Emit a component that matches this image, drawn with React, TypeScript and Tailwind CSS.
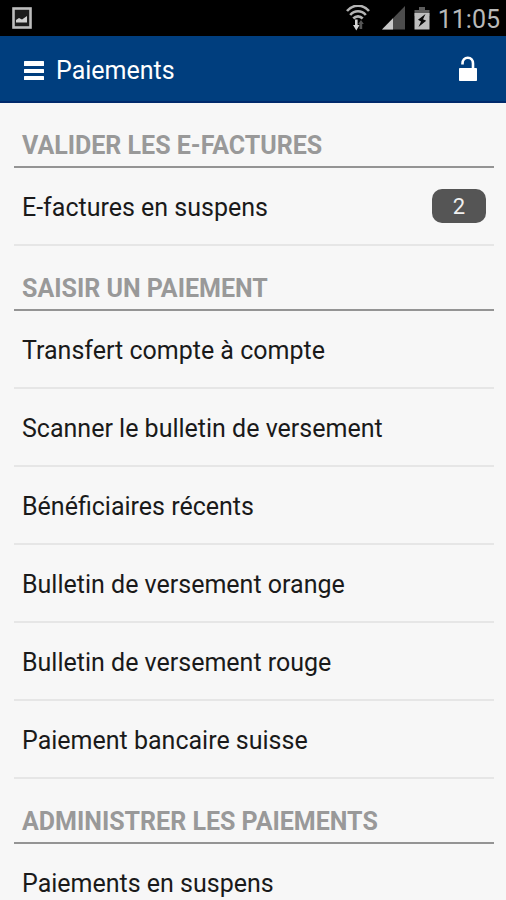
type Item = { label: string; count?: number };

const sections: { title: string; items: Item[] }[] = [
  {
    title: "VALIDER LES E-FACTURES",
    items: [{ label: "E-factures en suspens", count: 2 }],
  },
  {
    title: "SAISIR UN PAIEMENT",
    items: [
      { label: "Transfert compte à compte" },
      { label: "Scanner le bulletin de versement" },
      { label: "Bénéficiaires récents" },
      { label: "Bulletin de versement orange" },
      { label: "Bulletin de versement rouge" },
      { label: "Paiement bancaire suisse" },
    ],
  },
  {
    title: "ADMINISTRER LES PAIEMENTS",
    items: [{ label: "Paiements en suspens" }],
  },
];

function PictureIcon() {
  return (
    <svg width="20" height="22" viewBox="0 0 20 22" aria-hidden="true">
      <rect x="1.5" y="1.5" width="17" height="19" fill="#1c1c1c" stroke="#bdbdbd" strokeWidth="2.6" />
      <path d="M4 15.5V13l3-2 3 1.500 5-3.500V15.500z" fill="#d0d0d0" />
    </svg>
  );
}

function WifiIcon() {
  return (
    <svg width="24" height="26" viewBox="0 0 24 26" fill="none" aria-hidden="true">
      <g stroke="#b4b4b4" strokeWidth="2.6">
        <path d="M1 6C7-1 17-1 23 6" />
        <path d="M4.200 10C8.600 5 15.400 5 19.800 10" />
        <path d="M7.300 13.500C10 10.600 14 10.600 16.700 13.500" />
      </g>
      <path d="M9 14.500h2.600V20h2L10.300 25.500 7 20h2z" fill="#d6d6d6" />
      <path d="M13.500 24v-5h-1.300l2.800-4 2.800 4h-1.600v5z" fill="#555" />
    </svg>
  );
}

function SignalIcon() {
  return (
    <svg width="24" height="24" viewBox="0 0 24 24" aria-hidden="true">
      <path d="M0 23.500 23 0v23.500z" fill="#4c4c4c" />
      <path d="M0 23.500 11 12.300v11.200z" fill="#c8c8c8" />
    </svg>
  );
}

function BatteryIcon() {
  return (
    <svg width="16" height="24" viewBox="0 0 16 24" aria-hidden="true">
      <path d="M5 1h6v3h4.500v6H.5V4H5z" fill="#5c5c5c" />
      <path d="M.5 7h15v16.500H.5z" fill="#bebebe" />
      <path d="M11.500 8 4 13.800l3 1.700L4.500 21l7.700-6.200-3.200-1.600z" fill="#080808" />
    </svg>
  );
}

function MenuIcon() {
  return (
    <svg width="20" height="20" viewBox="0 0 20 20" fill="#fff" aria-hidden="true">
      <rect y="0" width="20" height="5" rx=".5" />
      <rect y="8" width="20" height="4" rx=".5" />
      <rect y="15" width="20" height="4" rx=".5" />
    </svg>
  );
}

function UnlockIcon() {
  return (
    <svg width="18" height="26" viewBox="0 0 18 26" fill="none" aria-hidden="true">
      <path d="M3.500 8.500V7.500C3.500 4 5.600 1.700 8.800 1.700s5.200 2.300 5.200 5.800V13" stroke="#fff" strokeWidth="2.600" />
      <rect y="12" width="18" height="13" rx=".8" fill="#fff" />
    </svg>
  );
}

function StatusBar() {
  return (
    <div className="flex h-9 items-center justify-between bg-black pr-[6px] pl-3">
      <PictureIcon />
      <div className="flex items-center">
        <WifiIcon />
        <div className="ml-3 flex items-center gap-2">
          <SignalIcon />
          <BatteryIcon />
        </div>
        <span className="ml-2 pt-1 text-[25px] leading-8 text-[#b9b9b9]">11:05</span>
      </div>
    </div>
  );
}

function Row({ label, count }: Item) {
  return (
    <li className="border-b-2 border-[#e6e6e6]">
      <a href="#" className="flex h-[76px] items-center justify-between px-2 text-[25px] text-[#1a1a1a]">
        <span className="pt-1">{label}</span>
        {count !== undefined && (
          <span className="flex h-[34px] w-[54px] items-center justify-center rounded-[10px] bg-[#555] text-[22px] text-[#f0f0f0]">
            {count}
          </span>
        )}
      </a>
    </li>
  );
}

export default function App() {
  return (
    <div className="h-screen overflow-hidden bg-[#f7f7f7] font-['Roboto',sans-serif]">
      <StatusBar />
      <header className="flex h-[67px] items-center justify-between border-b-2 border-[#002a6c] bg-[#003e7e] pr-[29px] pl-6">
        <div className="flex items-center gap-3 pt-1">
          <button type="button" aria-label="Menu">
            <MenuIcon />
          </button>
          <h1 className="text-[25px] text-white">Paiements</h1>
        </div>
        <button type="button" aria-label="Déconnexion">
          <UnlockIcon />
        </button>
      </header>
      <main className="pr-3 pl-[14px]">
        {sections.map((section) => (
          <section key={section.title}>
            <h2 className="flex h-[65px] items-end border-b-2 border-[#949494] px-2 pb-1 text-[25px] leading-8 font-bold text-[#999]">
              {section.title}
            </h2>
            <ul>
              {section.items.map((item) => (
                <Row key={item.label} {...item} />
              ))}
            </ul>
          </section>
        ))}
      </main>
    </div>
  );
}
